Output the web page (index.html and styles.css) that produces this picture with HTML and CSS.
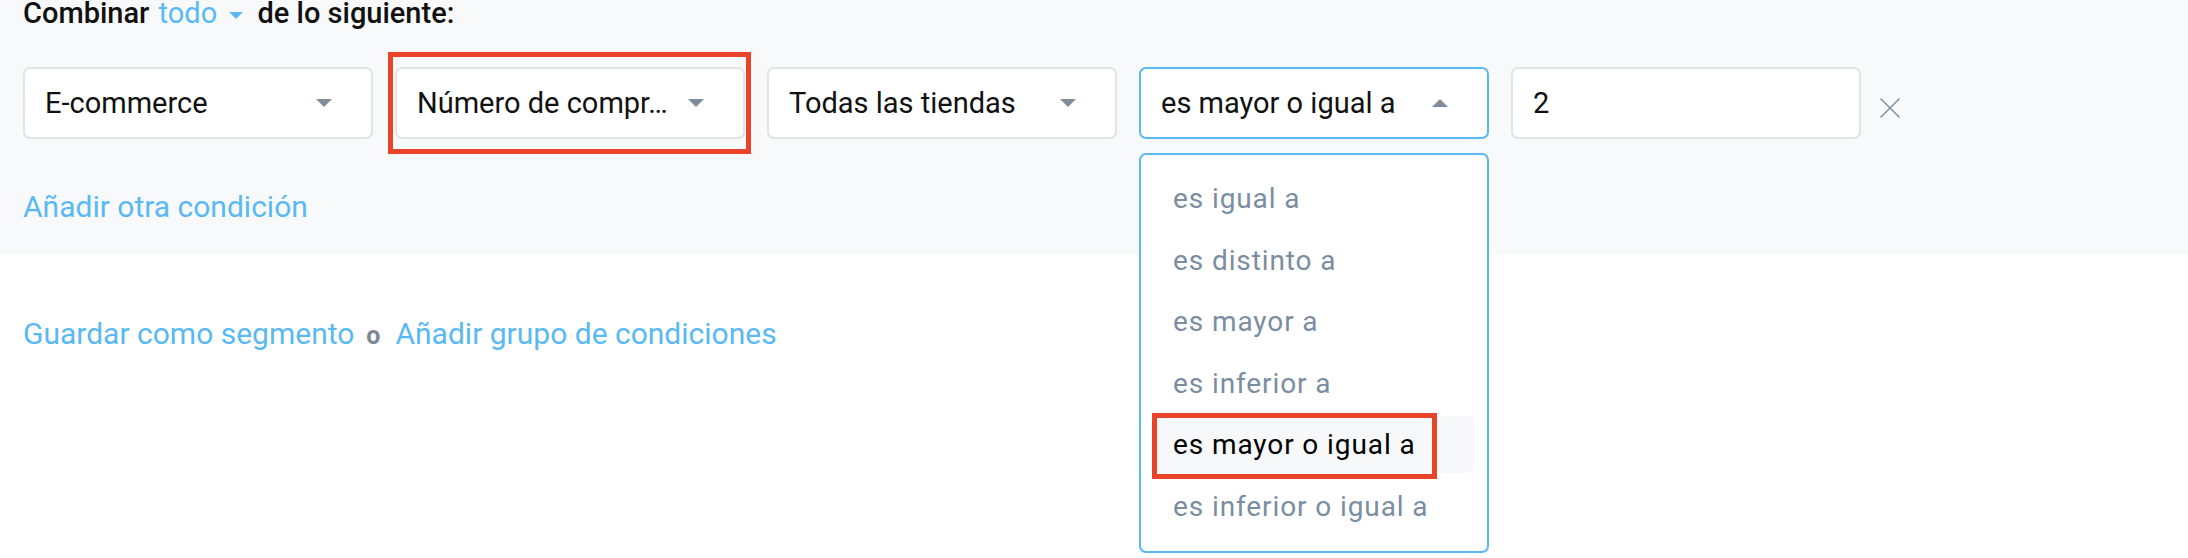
FILE: index.html
```html
<!DOCTYPE html>
<html lang="es">
<head>
<meta charset="UTF-8">
<meta name="viewport" content="width=device-width, initial-scale=1.0">
<title>Segmentos</title>
<link rel="stylesheet" href="styles.css">
</head>
<body>
<div class="group">
    <div class="combine">
        Combinar
        <span class="combine-mode">todo<span class="caret caret-blue"></span></span>
        de lo siguiente:
    </div>
    <div class="conditions">
        <div class="select">
            <span class="select-label">E-commerce</span>
            <span class="caret"></span>
        </div>
        <div class="select marked">
            <span class="select-label">Número de compr…</span>
            <span class="caret"></span>
        </div>
        <div class="select">
            <span class="select-label">Todas las tiendas</span>
            <span class="caret"></span>
        </div>
        <div class="select-wrap">
            <div class="select open">
                <span class="select-label">es mayor o igual a</span>
                <span class="caret caret-up"></span>
            </div>
            <ul class="menu">
                <li class="menu-item">es igual a</li>
                <li class="menu-item">es distinto a</li>
                <li class="menu-item">es mayor a</li>
                <li class="menu-item">es inferior a</li>
                <li class="menu-item active">es mayor o igual a<span class="mark"></span></li>
                <li class="menu-item">es inferior o igual a</li>
            </ul>
        </div>
        <div class="value">2</div>
        <button class="remove" title="Eliminar">
            <svg width="20" height="20" viewBox="0 0 20 20">
                <path d="M0.5 0.5 L19.5 19.5 M19.5 0.5 L0.5 19.5" stroke="#7a8a9c" stroke-width="1.4" fill="none"/>
            </svg>
        </button>
    </div>
    <a class="link add-condition" href="#">Añadir otra condición</a>
</div>
<div class="actions">
    <a class="link" href="#">Guardar como segmento</a>
    <span class="or">o</span>
    <a class="link" href="#">Añadir grupo de condiciones</a>
</div>
</body>
</html>
```

FILE: styles.css
```css
html,
body {
    min-height: 100vh;
}

body {
    margin: 0;
    font-family: Roboto, "Liberation Sans", sans-serif;
    background-color: #fff;
    color: #111;
}

.group {
    background-color: #f8f9fb;
    padding: 0 23px;
    height: 257px;
}

.combine {
    font-size: 29px;
    font-weight: 500;
    line-height: 30px;
    margin-top: -2px;
}

.combine-mode {
    color: #5ab9f4;
    font-weight: 400;
    margin: 0 7px 0 2px;
}

.caret {
    display: inline-block;
    width: 0;
    height: 0;
    border-left: 8px solid transparent;
    border-right: 8px solid transparent;
    border-top: 8px solid #7f8c99;
}

.caret-blue {
    border-top-color: #5ab9f4;
    border-left-width: 7.5px;
    border-right-width: 7.5px;
    border-top-width: 7px;
    vertical-align: middle;
    margin-left: 12px;
}

.caret-up {
    border-top: none;
    border-bottom: 8px solid #7f8c99;
}

.conditions {
    display: flex;
    align-items: center;
    gap: 22px;
    margin-top: 39px;
}

.select,
.value {
    box-sizing: border-box;
    width: 350px;
    height: 72px;
    background-color: #fff;
    border: 2px solid #e3e3e3;
    border-radius: 7px;
    display: flex;
    align-items: center;
    padding: 0 39px 0 20px;
    font-size: 29px;
    position: relative;
}

.select-label {
    flex: 1;
    white-space: nowrap;
}

.select.open {
    border-color: #5ab9f4;
}

.marked::after {
    content: "";
    position: absolute;
    top: -17px;
    bottom: -17px;
    left: -9px;
    right: -8px;
    border: 5px solid #e9432a;
}

.select-wrap {
    position: relative;
}

.menu {
    position: absolute;
    top: 86px;
    left: 0;
    box-sizing: border-box;
    width: 350px;
    margin: 0;
    padding: 15px 13px 16px 12px;
    list-style: none;
    background-color: #fff;
    border: 2px solid #5ab9f4;
    border-radius: 7px;
    display: flex;
    flex-direction: column;
    gap: 4.6px;
    z-index: 2;
}

.menu-item {
    position: relative;
    height: 57px;
    line-height: 57px;
    padding-left: 20px;
    font-size: 28px;
    letter-spacing: 0.9px;
    color: #7b8da1;
    border-radius: 6px;
}

.menu-item.active {
    color: #000;
    background-color: #f7f8fa;
}

.mark {
    position: absolute;
    top: -3px;
    left: -1px;
    width: 285px;
    height: 66px;
    box-sizing: border-box;
    border: 5px solid #e9432a;
}

.remove {
    background: none;
    border: none;
    padding: 0;
    margin: 9px 0 0 -3px;
    width: 20px;
    height: 20px;
    cursor: pointer;
}

.remove svg {
    display: block;
}

.link {
    color: #5ab9f4;
    text-decoration: none;
    font-size: 30px;
}

.add-condition {
    display: inline-block;
    margin-top: 50px;
}

.actions {
    padding: 61px 23px 0;
    display: flex;
    align-items: baseline;
}

.or {
    font-size: 25px;
    font-weight: 700;
    color: #7a8797;
    margin: 0 15px 0 12px;
}
```
